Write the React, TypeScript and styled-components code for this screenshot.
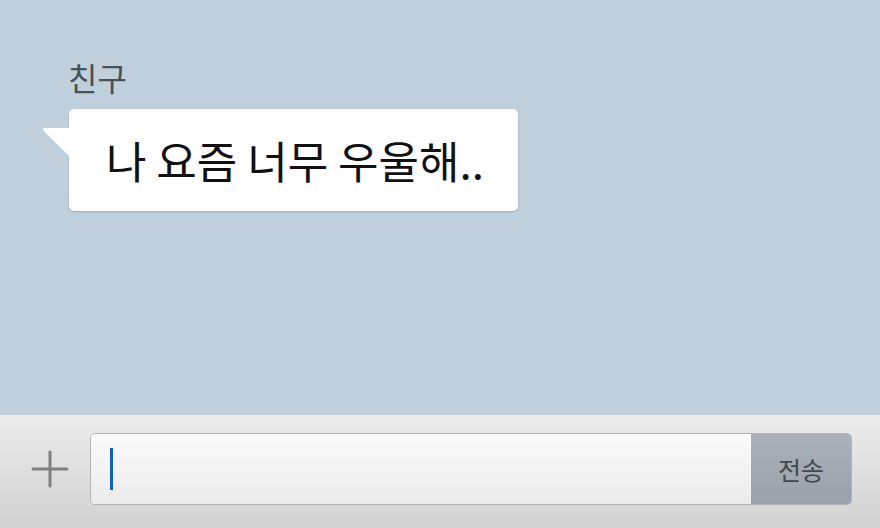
import React from 'react';
import styled, {createGlobalStyle} from 'styled-components';

const GlobalStyle = createGlobalStyle`
    html, body {
        margin: 0;
        padding: 0;
        height: 100%;
    }
    body {
        font-family: "Noto Sans CJK KR", "Noto Sans", sans-serif;
    }
    #root {
        height: 100%;
    }
`

function App() {
    return (
        <>
            <GlobalStyle/>
            <Page>
                <ChatArea>
                    <Message>
                        <Sender>친구</Sender>
                        <Bubble>나 요즘 너무 우울해..</Bubble>
                    </Message>
                </ChatArea>
                <InputBar>
                    <PlusButton aria-label="add">
                        <svg width="38" height="38" viewBox="0 0 38 38">
                            <path d="M19 2 V36 M2 19 H36" stroke="#808080" strokeWidth="3" strokeLinecap="round"/>
                        </svg>
                    </PlusButton>
                    <InputBox>
                        <Field>
                            <Caret/>
                        </Field>
                        <SendButton>전송</SendButton>
                    </InputBox>
                </InputBar>
            </Page>
        </>
    )
}

export default App;

const Page = styled.div`
    width: 880px;
    height: 528px;
    display: flex;
    flex-direction: column;
    background-color: #bfd0dc;
    overflow: hidden;
`
const ChatArea = styled.div`
    flex-grow: 1;
    padding: 57px 0 0 69px;
`
const Message = styled.div`
    display: flex;
    flex-direction: column;
    align-items: flex-start;
    gap: 12px;
`
const Sender = styled.div`
    font-size: 32px;
    line-height: 40px;
    color: #4a5057;
    margin-left: -1px;
`
const Bubble = styled.div`
    position: relative;
    background-color: #ffffff;
    border-radius: 5px;
    box-shadow: 0 1px 2px rgba(0, 0, 0, 0.18);
    padding: 0 34px 0 37px;
    height: 102px;
    display: flex;
    align-items: center;
    font-size: 44px;
    color: #111111;

    &::before {
        content: "";
        position: absolute;
        left: -26px;
        top: 19px;
        width: 27px;
        height: 29px;
        background-color: #ffffff;
        clip-path: polygon(2% 0, 100% 0, 100% 100%, 0 8%);
    }
`
const InputBar = styled.div`
    height: 113px;
    display: flex;
    align-items: center;
    padding: 0 28px 5px 31px;
    gap: 21px;
    background: linear-gradient(to bottom, #ececec, #d2d2d2);
    box-sizing: border-box;
`
const PlusButton = styled.div`
    width: 38px;
    height: 38px;
    display: flex;
    align-items: center;
    justify-content: center;
`
const InputBox = styled.div`
    flex-grow: 1;
    height: 72px;
    display: flex;
    border: 1px solid #b2b2b2;
    border-radius: 5px;
    overflow: hidden;
    box-sizing: border-box;
`
const Field = styled.div`
    flex-grow: 1;
    display: flex;
    align-items: center;
    padding-left: 19px;
    background: linear-gradient(to bottom, #fbfbfb, #ebebeb);
`
const Caret = styled.div`
    width: 3px;
    height: 42px;
    background-color: #0a5fd2;
`
const SendButton = styled.div`
    width: 100px;
    display: flex;
    align-items: center;
    justify-content: center;
    font-size: 25px;
    color: #434850;
    background: linear-gradient(to bottom, #aab1bb, #9aa1ab);
`
